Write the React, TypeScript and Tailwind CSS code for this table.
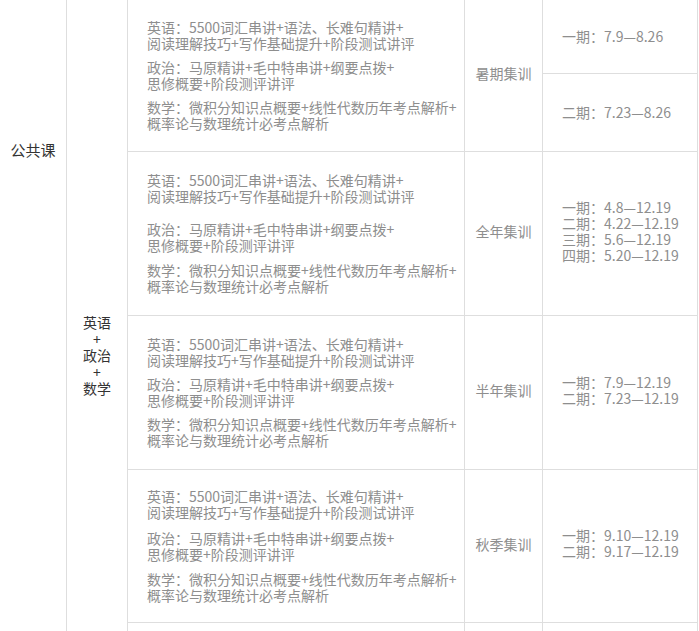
import React from 'react';

const english = ['英语：5500词汇串讲+语法、长难句精讲+', '阅读理解技巧+写作基础提升+阶段测试讲评'];
const politics = ['政治：马原精讲+毛中特串讲+纲要点拨+', '思修概要+阶段测评讲评'];
const maths = ['数学：微积分知识点概要+线性代数历年考点解析+', '概率论与数理统计必考点解析'];

const rows = [
  { h: 'h-[152px]', gaps: ['mb-[8px]', 'mb-[8px]'], name: '暑期集训', split: true, dates: ['一期：7.9—8.26', '二期：7.23—8.26'] },
  {
    h: 'h-[164px]',
    gaps: ['mb-[17px]', 'mb-[9px]'],
    name: '全年集训',
    split: false,
    dates: ['一期：4.8—12.19', '二期：4.22—12.19', '三期：5.6—12.19', '四期：5.20—12.19'],
  },
  { h: 'h-[154px]', gaps: ['mb-[8px]', 'mb-[8px]'], name: '半年集训', split: false, dates: ['一期：7.9—12.19', '二期：7.23—12.19'] },
  { h: 'h-[153px]', gaps: ['mb-[10px]', 'mb-[9px]'], name: '秋季集训', split: false, dates: ['一期：9.10—12.19', '二期：9.17—12.19'] },
];

function Para({ lines, gap }: { lines: string[]; gap?: string }) {
  return (
    <p className={gap}>
      {lines[0]}
      <br />
      {lines[1]}
    </p>
  );
}

export default function App() {
  return (
    <div
      className="flex h-[631px] w-[699px] overflow-hidden bg-white text-[14px]"
      style={{ fontFamily: '"Noto Sans CJK SC", "Noto Sans", sans-serif' }}
    >
      {/* 课程类别 */}
      <div className="w-[67px] shrink-0 border-r border-[#dedede] pt-[140px] text-center text-[15px] leading-[20px] text-[#333]">
        公共课
      </div>

      {/* 科目 */}
      <div className="w-[61px] shrink-0 border-r border-[#dedede] pt-[314px] text-center text-[14px] leading-[16.5px] text-[#333]">
        <div>英语</div>
        <div>+</div>
        <div>政治</div>
        <div>+</div>
        <div>数学</div>
      </div>

      <div className="flex flex-col">
        {rows.map((row, i) => (
          <div key={i} className={`flex shrink-0 border-b border-[#dedede] ${row.h}`}>
            <div className="flex w-[337px] shrink-0 flex-col justify-center border-r border-[#dedede] pb-[2px] pl-[19px] leading-[16px] text-[#8e8e8e]">
              <Para lines={english} gap={row.gaps[0]} />
              <Para lines={politics} gap={row.gaps[1]} />
              <Para lines={maths} />
            </div>
            <div className="flex w-[78px] shrink-0 items-center justify-center border-r border-[#dedede] pb-[4px] text-[#8e8e8e]">
              {row.name}
            </div>
            {row.split ? (
              <div className="flex w-[155px] shrink-0 flex-col border-r border-[#dedede] text-[#8e8e8e]">
                <div className="flex h-[74px] items-center border-b border-[#dedede] pl-[19px]">{row.dates[0]}</div>
                <div className="flex flex-1 items-center pl-[19px]">{row.dates[1]}</div>
              </div>
            ) : (
              <div className="flex w-[155px] shrink-0 flex-col justify-center border-r border-[#dedede] pb-[6px] pl-[19px] leading-[16px] text-[#8e8e8e]">
                {row.dates.map((d) => (
                  <div key={d}>{d}</div>
                ))}
              </div>
            )}
          </div>
        ))}
        <div className="flex h-[40px] shrink-0">
          <div className="w-[337px] border-r border-[#dedede]" />
          <div className="w-[78px] border-r border-[#dedede]" />
          <div className="w-[155px] border-r border-[#dedede]" />
        </div>
      </div>
    </div>
  );
}
